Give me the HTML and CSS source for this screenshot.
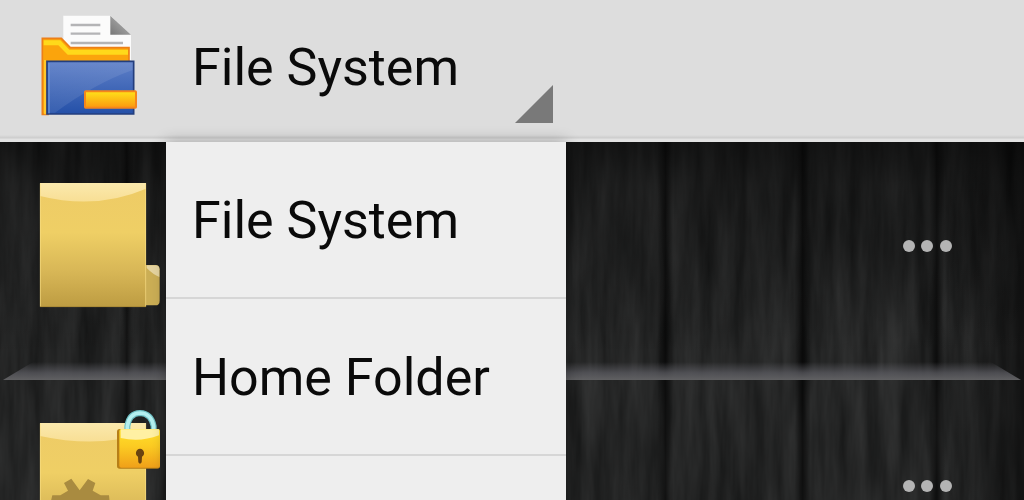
FILE: index.html
```html
<!DOCTYPE html>
<html lang="en">
<head>
<meta charset="utf-8">
<meta name="viewport" content="width=device-width, initial-scale=1">
<title>File System</title>
<link rel="stylesheet" href="styles.css">
</head>
<body class="app">
<header class="bar">
  <svg class="logo" viewBox="60 42 294 306" aria-hidden="true">
    <defs>
      <linearGradient id="blue" x1="0" y1="0" x2="0" y2="1"><stop offset="0" stop-color="#5f80c8"/><stop offset="1" stop-color="#2450a8"/></linearGradient>
      <linearGradient id="shine" x1="0" y1="0" x2="1" y2="1"><stop offset="0" stop-color="#fff" stop-opacity=".05"/><stop offset="1" stop-color="#fff" stop-opacity=".12"/></linearGradient>
      <linearGradient id="amber" x1="0" y1="0" x2="0" y2="1"><stop offset="0" stop-color="#ffe21a"/><stop offset="1" stop-color="#fb980f"/></linearGradient>
      <linearGradient id="fold" x1="0" y1="1" x2="1" y2="0"><stop offset="0" stop-color="#777"/><stop offset="1" stop-color="#bbb"/></linearGradient>
    </defs>
    <path d="M130 47H272L333 104V180H130Z" fill="#fbfbfb"/>
    <path d="M271 47L333 104H271Z" fill="url(#fold)"/>
    <path d="M152 75H241M152 101H241M152 129H309" stroke="#b4b4b6" stroke-width="7"/>
    <path d="M67 343V115H124L151 143H327V190H84V343Z" fill="#fba40c" stroke="#ed7f17" stroke-width="5"/>
    <path d="M71 121H121L148 149H324V164H143L115 136H71Z" fill="#ffd91a"/>
    <path d="M75 180V343" stroke="#ffcf35" stroke-width="5"/>
    <path d="M81 184H341V342H81Z" fill="url(#blue)" stroke="#233e7d" stroke-width="5"/>
    <path d="M87 188V340" stroke="#6e9ae0" stroke-width="4"/>
    <path d="M90 187H338V210Q225 250 105 338H90Z" fill="url(#shine)"/>
    <rect x="195" y="274" width="153" height="49" rx="2" fill="url(#amber)" stroke="#f5861b" stroke-width="6"/>
  </svg>
  <div class="spinner">
    <button class="spinner-button" type="button" aria-haspopup="true" aria-expanded="true" aria-controls="places">
      <span>File System</span>
      <svg class="corner" viewBox="0 0 38 38" aria-hidden="true"><path d="M38 0V38H0Z" fill="#797979"/></svg>
    </button>
    <ul class="menu" id="places">
      <li class="menu-row"><button class="menu-item" type="button">File System</button></li>
      <li class="menu-row"><button class="menu-item" type="button">Home Folder</button></li>
      <li class="menu-row"></li>
    </ul>
  </div>
</header>
<main class="shelves">
  <svg class="wood" aria-hidden="true">
    <defs>
      <filter id="grain" x="0" y="0" width="100%" height="100%" color-interpolation-filters="sRGB">
        <feTurbulence type="fractalNoise" baseFrequency="0.06 0.007" numOctaves="4" seed="8"/>
        <feColorMatrix values="0.15 0 0 0 0.067  0.15 0 0 0 0.07  0.15 0 0 0 0.07  0 0 0 0 1"/>
      </filter>
      <linearGradient id="seam"><stop offset="0" stop-opacity="0"/><stop offset=".5" stop-opacity=".6"/><stop offset="1" stop-opacity="0"/></linearGradient>
      <linearGradient id="shade" x1="0" y1="0" x2="0" y2="1"><stop offset="0" stop-opacity=".5"/><stop offset=".12" stop-opacity=".3"/><stop offset=".6" stop-opacity="0"/></linearGradient>
      <linearGradient id="edge"><stop offset="0" stop-opacity="0"/><stop offset="1" stop-opacity=".45"/></linearGradient>
    </defs>
    <rect width="100%" height="100%" filter="url(#grain)"/>
    <rect x="11.7%" width="14" height="100%" fill="url(#seam)"/>
    <rect x="64.2%" width="16" height="100%" fill="url(#seam)"/>
    <rect x="77.6%" width="16" height="100%" fill="url(#seam)"/>
    <rect x="90.7%" width="16" height="100%" fill="url(#seam)"/>
    <rect x="92%" width="8%" height="100%" fill="url(#edge)"/>
    <rect width="100%" height="100%" fill="url(#shade)"/>
  </svg>
  <ul class="list">
    <li class="entry">
      <div class="entry-body">
        <svg class="folder" viewBox="120 126 360 378" aria-hidden="true">
          <defs>
            <linearGradient id="paper" x1="0" y1="0" x2="0" y2="1"><stop offset="0" stop-color="#eecb66"/><stop offset=".4" stop-color="#efcf65"/><stop offset=".72" stop-color="#d7b656"/><stop offset="1" stop-color="#bd9c42"/></linearGradient>
            <linearGradient id="gloss" x1="0" y1="0" x2="0" y2="1"><stop offset="0" stop-color="#fbe9ad"/><stop offset="1" stop-color="#f8df95"/></linearGradient>
          </defs>
          <path d="M434 375H466Q479 375 479 388V482Q479 496 466 496H434Z" fill="#cbae55"/>
          <path d="M440 376H466Q478 376 478 388V411Q460 404 440 384Z" fill="#e5d4a0"/>
          <path d="M120 129H438V501H120Z" fill="url(#paper)"/>
          <path d="M120 129H438V146Q290 210 120 168Z" fill="url(#gloss)"/>
          <path d="M121 130V500M437 130V500" stroke="#f9df86" stroke-width="2"/>
          <path d="M120 500H438" stroke="#9e8132" stroke-width="2"/>
        </svg>
        <button class="more" type="button" aria-label="More options"><svg class="dots" viewBox="0 0 50 14" aria-hidden="true"><g fill="#b4b4b4"><circle cx="6" cy="6" r="6"/><circle cx="24" cy="6" r="6"/><circle cx="43" cy="6" r="6"/></g></svg></button>
      </div>
      <div class="shelf"></div>
    </li>
    <li class="entry">
      <div class="entry-body">
        <svg class="folder" viewBox="120 126 360 378" aria-hidden="true">
          <defs>
            <linearGradient id="gold" x1="0" y1="0" x2="0" y2="1"><stop offset="0" stop-color="#ffe02b"/><stop offset=".45" stop-color="#fccb22"/><stop offset="1" stop-color="#f0a019"/></linearGradient>
          </defs>
          <path d="M120 129H438V501H120Z" fill="url(#paper)"/>
          <path d="M120 129H438V160Q290 205 120 168Z" fill="url(#gloss)"/>
          <path d="M121 130V500M437 130V500" stroke="#f9df86" stroke-width="2"/>
          <path d="M150 375L157 346H181L204 332L192 309L214 296L239 331L264 297L286 309L278 332L302 346H327L330 375Z" fill="#a98b40"/>
          <path d="M382 152V139Q387 100 420 99Q454 100 461 139V152" fill="none" stroke="#6fbfc3" stroke-width="18"/>
          <path d="M382 152V139Q387 100 420 99Q454 100 461 139V152" fill="none" stroke="#b4f0f0" stroke-width="11"/>
          <rect x="351" y="147" width="129" height="119" rx="8" fill="#b77f17"/>
          <rect x="358" y="147" width="122" height="116" rx="6" fill="url(#gold)"/>
          <path d="M362 148H477V166Q420 188 362 174Z" fill="#fff0a3"/>
          <path d="M420 206a13 13 0 0 1 6 24l-1 17q-5 8-10 0l-1-17a13 13 0 0 1 6-24Z" fill="#6a4310"/>
        </svg>
        <button class="more" type="button" aria-label="More options"><svg class="dots" viewBox="0 0 50 14" aria-hidden="true"><g fill="#b4b4b4"><circle cx="6" cy="6" r="6"/><circle cx="24" cy="6" r="6"/><circle cx="43" cy="6" r="6"/></g></svg></button>
      </div>
      <div class="shelf"></div>
    </li>
  </ul>
</main>
</body>
</html>
```
FILE: styles.css
```css
* { box-sizing: border-box; }

.app {
  margin: 0;
  height: 100vh;
  display: flex;
  flex-direction: column;
  overflow: hidden;
  background: #171818;
  color: #0a0a0a;
  font-family: Roboto, "Liberation Sans", sans-serif;
  font-size: 52px;
  line-height: 60px;
}

button {
  margin: 0;
  border: 0;
  background: none;
  color: inherit;
  font: inherit;
  text-align: left;
}

ul {
  margin: 0;
  padding: 0;
  list-style: none;
}

.bar {
  position: relative;
  z-index: 1;
  flex: none;
  display: flex;
  gap: 28px;
  padding-left: 40px;
  background: linear-gradient(to top, #e2e2e2 3px, #cccccc 4px, #dddddd 7px);
}

.logo {
  width: 98px;
  height: 102px;
  margin-top: 14px;
}

.spinner {
  position: relative;
  width: 400px;
}

.spinner-button {
  display: flex;
  justify-content: space-between;
  width: 100%;
  padding: 38px 13px 19px 26px;
}

.corner {
  width: 38px;
  height: 38px;
  margin-top: 47px;
}

.menu {
  position: absolute;
  top: 100%;
  left: 0;
  width: 100%;
  background: #eeeeee;
  box-shadow: 0 0 14px rgba(0, 0, 0, 0.3);
}

.menu-row {
  min-height: 156px;
  border-bottom: 2px solid #d6d6d6;
}

.menu-item {
  display: block;
  width: 100%;
  padding: 49px 26px 46px;
}

.shelves {
  position: relative;
  flex: 1;
  min-height: 0;
  overflow: hidden;
}

.wood {
  position: absolute;
  inset: 0;
  width: 100%;
  height: 100%;
}

.list {
  position: relative;
  margin-top: -2px;
}

.entry-body {
  display: flex;
  align-items: center;
  justify-content: space-between;
  height: 210px;
  padding: 0 71px 0 40px;
}

.folder {
  width: 120px;
  height: 126px;
  overflow: visible;
}

.more {
  padding: 0;
  line-height: 0;
}

.dots {
  width: 50px;
  height: 14px;
}

.shelf {
  height: 18px;
  margin: 12px 3px 0;
  background: linear-gradient(rgba(92, 92, 98, 0), rgba(92, 92, 98, 0.75) 60%, #606062);
  clip-path: polygon(30px 0, calc(100% - 30px) 0, 100% 100%, 0 100%);
}
```
